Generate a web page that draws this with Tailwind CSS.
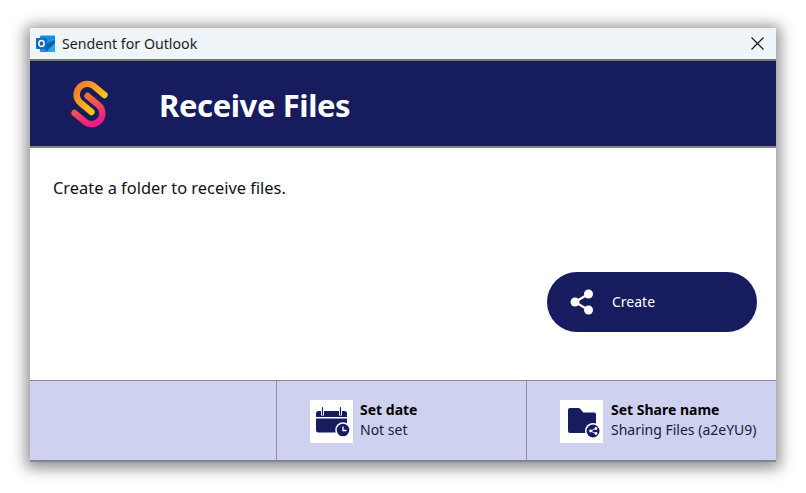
<!DOCTYPE html>
<html lang="en">
<head>
    <meta charset="UTF-8">
    <title>Sendent for Outlook</title>
    <script src="https://cdn.jsdelivr.net/npm/@tailwindcss/browser@4"></script>
</head>
<body class="bg-white w-[806px] h-[493px] overflow-hidden pt-[28px] pl-[30px] font-['Noto_Sans',sans-serif]">
<div class="w-[746px] h-[434px] flex flex-col bg-white shadow-[0_2px_14px_4px_rgba(0,0,0,0.45)]">

    <!-- title bar -->
    <div class="h-[33px] shrink-0 flex items-center bg-[#eff4f9] border-b-2 border-[#76767f] pl-[6px] pr-[12px]">
        <svg class="w-[20px] h-[18px] mr-[6px]" viewBox="0 0 20 18">
            <rect x="4" y="0.5" width="15" height="16.5" rx="1" fill="#1490df"/>
            <path d="M10 9l9-4v12H10z" fill="#0a5fa8"/>
            <path d="M10 17l9-9v9z" fill="#28a8ea"/>
            <rect x="0" y="3" width="11" height="11" rx="1" fill="#0f6cbd"/>
            <ellipse cx="5.5" cy="8.5" rx="2.6" ry="3" fill="none" stroke="#fff" stroke-width="1.5"/>
        </svg>
        <span class="text-[14.2px] text-[#1c1c1c]">Sendent for Outlook</span>
        <svg class="w-[13px] h-[13px] ml-auto" viewBox="0 0 13 13">
            <path d="M0.5 0.5l12 12M12.5 0.5l-12 12" stroke="#111" stroke-width="1.1" fill="none"/>
        </svg>
    </div>

    <!-- header -->
    <div class="h-[87px] shrink-0 flex items-center bg-[#161c5e] border-b-2 border-[#85858f] pl-[40px]">
        <svg class="w-[40px] h-[50px] mr-[49px]" viewBox="70 78 40 50">
            <defs>
                <linearGradient id="logoA" gradientUnits="userSpaceOnUse" x1="76" y1="86" x2="100" y2="106">
                    <stop offset="0" stop-color="#f47b2a"/>
                    <stop offset="1" stop-color="#fdd017"/>
                </linearGradient>
                <linearGradient id="logoB" gradientUnits="userSpaceOnUse" x1="84" y1="96" x2="96" y2="122">
                    <stop offset="0" stop-color="#f6702d"/>
                    <stop offset="1" stop-color="#ec1a85"/>
                </linearGradient>
            </defs>
            <path d="M104.5 94L94.2 85.4A10.7 10.7 0 0 0 80.4 101.8L91.5 111" fill="none" stroke="url(#logoA)" stroke-width="6.4" stroke-linecap="round"/>
            <path d="M74.5 112L84.8 120.6A10.7 10.7 0 0 0 98.6 104.2L87.500 95" fill="none" stroke="url(#logoB)" stroke-width="6.4" stroke-linecap="round"/>
        </svg>
        <h1 class="text-[31px] leading-none font-bold text-white tracking-[-0.4px] pt-[3px]">Receive Files</h1>
    </div>

    <!-- content -->
    <div class="flex-1 bg-white px-[23px] pt-[29px] flex flex-col">
        <p class="text-[16.4px] leading-[22px] text-[#111]">Create a folder to receive files.</p>
        <button class="mt-[73px] self-end mr-[-4px] w-[210px] h-[60px] rounded-[30px] bg-[#161c5e] flex items-center pl-[23px] pb-[2px] text-white">
            <svg class="w-[24px] h-[26px] mr-[18px] mt-[2px]" viewBox="0 0 24 26" fill="#fff">
                <circle cx="18.500" cy="5" r="4.500"/>
                <circle cx="5" cy="13" r="4.500"/>
                <circle cx="18.500" cy="21" r="4.500"/>
                <path d="M5 13L18.500 5M5 13l13.500 8" stroke="#fff" stroke-width="2.200"/>
            </svg>
            <span class="text-[14px]">Create</span>
        </button>
    </div>

    <!-- footer -->
    <div class="h-[82px] shrink-0 flex bg-[#cfd1f0] border-t border-[#8a8a94] shadow-[inset_0_-2px_0_#85858f] pb-[1px]">
        <div class="w-[247px] border-r border-[#8f8f98]"></div>
        <div class="w-[250px] border-r border-[#8f8f98] flex items-center pl-[33px]">
            <svg class="w-[43px] h-[43px] mr-[7px] bg-white" viewBox="310 400 43 43">
                <path d="M318.500 411h26a2.500 2.500 0 0 1 2.500 2.500V417h-31v-3.500a2.500 2.500 0 0 1 2.500-2.500z" fill="#161c5e"/>
                <path d="M316 418.500h31V430a2.500 2.500 0 0 1-2.500 2.500h-26a2.500 2.500 0 0 1-2.500-2.500z" fill="#161c5e"/>
                <path d="M322.500 407.500v8M340.500 407.500v8" stroke="#fff" stroke-width="3"/>
                <path d="M322.500 407.500v7M340.500 407.500v7" stroke="#161c5e" stroke-width="1.100" stroke-linecap="round"/>
                <circle cx="343" cy="430" r="7.800" fill="#fff"/>
                <circle cx="343" cy="430" r="6.300" fill="#161c5e"/>
                <path d="M343 426.500v4h3.500" fill="none" stroke="#fff" stroke-width="1.300"/>
            </svg>
            <div class="text-[14px] leading-[20px] text-[#161c3e] pb-[2px]">
                <div class="font-bold text-black">Set date</div>
                <div>Not set</div>
            </div>
        </div>
        <div class="flex-1 flex items-center pl-[33px]">
            <svg class="w-[43px] h-[43px] mr-[8px] bg-white" viewBox="560 400 43 43">
                <path d="M570 408h8.500a2 2 0 0 1 1.400 .6l3.400 3.900H594a2 2 0 0 1 2 2V431a2 2 0 0 1-2 2h-24a2 2 0 0 1-2-2V410a2 2 0 0 1 2-2z" fill="#161c5e"/>
                <circle cx="593" cy="431" r="8" fill="#fff"/>
                <circle cx="593" cy="431" r="6.500" fill="#161c5e"/>
                <circle cx="596" cy="428.500" r="1.400" fill="#fff"/>
                <circle cx="590.500" cy="431" r="1.400" fill="#fff"/>
                <circle cx="596" cy="433.500" r="1.400" fill="#fff"/>
                <path d="M590.500 431L596 428.500M590.500 431l5.500 2.500" stroke="#fff" stroke-width="0.900"/>
            </svg>
            <div class="text-[14px] leading-[20px] text-[#161c3e] whitespace-nowrap pb-[2px]">
                <div class="font-bold text-black">Set Share name</div>
                <div>Sharing Files (a2eYU9)</div>
            </div>
        </div>
    </div>
</div>
</body>
</html>
